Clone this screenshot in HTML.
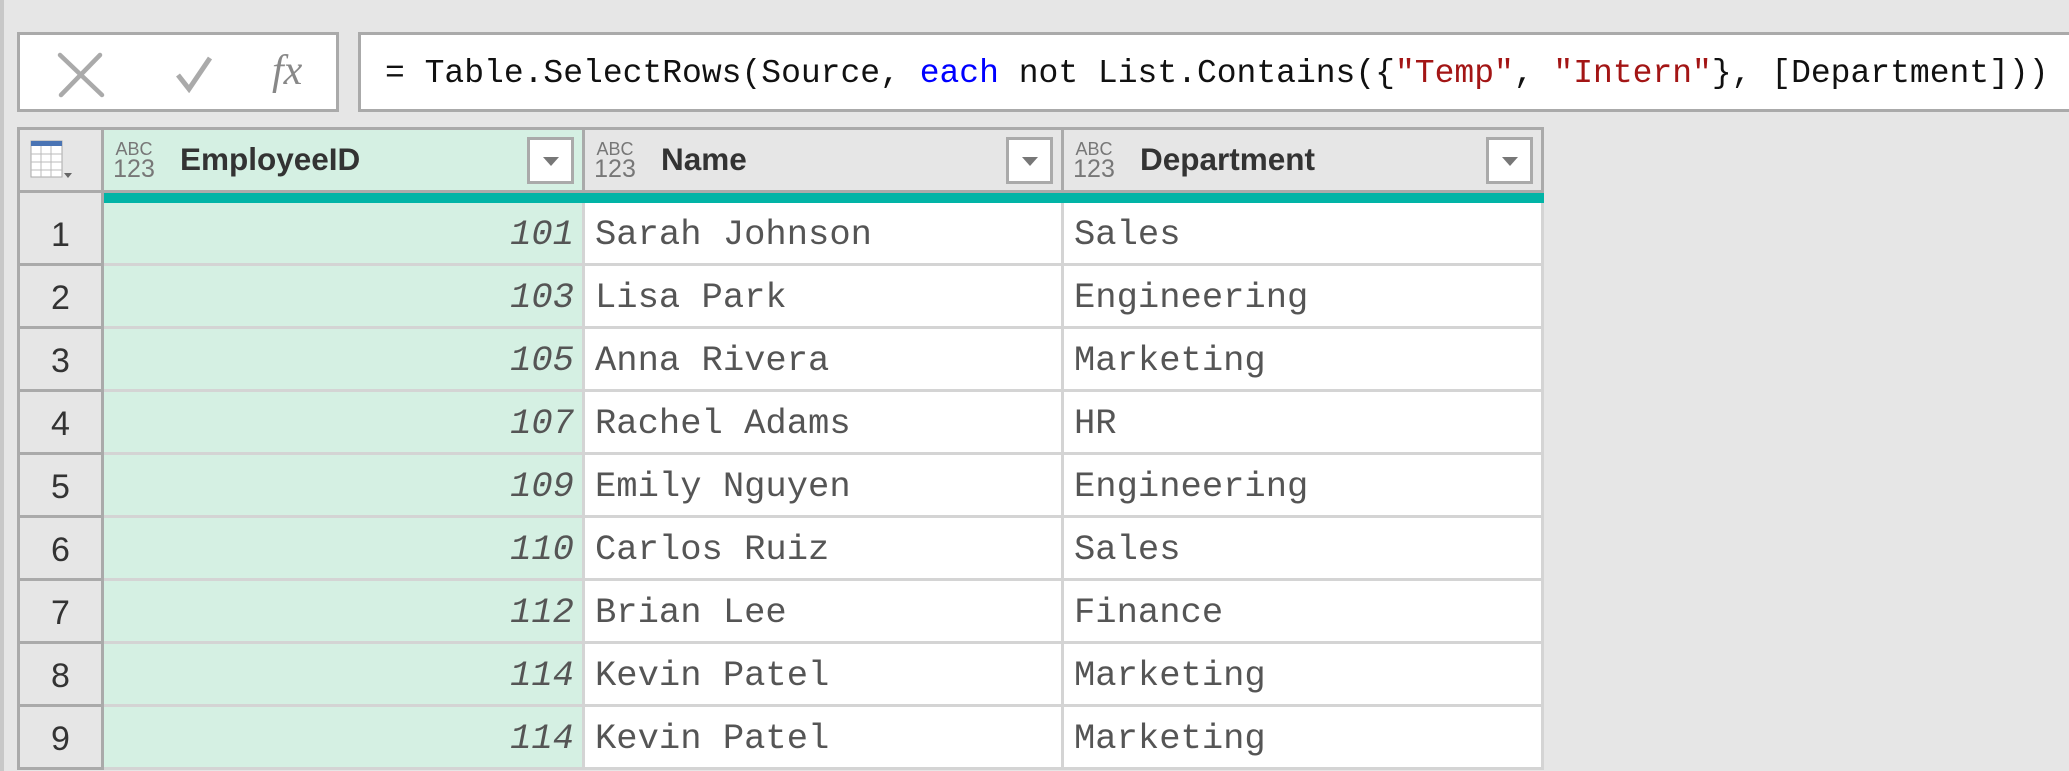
<!DOCTYPE html>
<html><head><meta charset="utf-8"><style>
*{margin:0;padding:0;box-sizing:border-box}
body{width:2069px;height:771px;background:#e6e6e6;position:relative;overflow:hidden;font-family:"Liberation Sans",sans-serif}
.a{position:absolute}
.mono{font-family:"Liberation Mono",monospace}
.hdr{position:absolute;top:127px;height:66px;background:#e6e6e6;border:3px solid #aaa;border-left:none}
.ht{position:absolute;left:76px;top:11px;font-weight:bold;font-size:31.5px;color:#333}
.ic{position:absolute;left:9px;top:10px;font-size:18px;line-height:18px;color:#777;text-align:center;width:42px}
.ic b{display:block;font-weight:normal;font-size:25px;line-height:22px}
.dd{position:absolute;right:8px;top:7px;width:47px;height:47px;background:#fff;border:3px solid #aaa}
.dd:after{content:"";position:absolute;left:13px;top:17px;border-left:8px solid transparent;border-right:8px solid transparent;border-top:9px solid #777}
.row{position:absolute;left:17px;height:63px;width:1527px}
.rn{position:absolute;left:0;top:0;width:87px;height:63px;background:#e6e6e6;border-left:3px solid #aaa;border-right:3px solid #aaa;border-bottom:3px solid #aaa;font-size:34px;color:#333;text-align:center;line-height:64px}
.c{position:absolute;top:0;height:63px;border-right:3px solid #d4d4d4;border-bottom:3px solid #d4d4d4;font-family:"Liberation Mono",monospace;font-size:35.5px;color:#555;line-height:64px;padding-left:10px;white-space:pre}
.c1{left:87px;width:481px;background:#d5f0e3;text-align:right;padding-right:8px;font-style:italic}
.c2{left:568px;width:479px;background:#fff}
.c3{left:1047px;width:480px;background:#fff}
</style></head><body>
<div class="a" style="left:0;top:0;width:4px;height:771px;background:#c8c8c8"></div>
<div class="a" style="left:17px;top:32px;width:322px;height:80px;background:#fff;border:3px solid #aaa">
<svg class="a" style="left:36px;top:17px" width="50" height="46" viewBox="0 0 50 46"><path d="M4 3 L46 43 M44 3 L5 43" stroke="#aaa" stroke-width="4.5" fill="none" stroke-linecap="round"/></svg>
<svg class="a" style="left:155px;top:20px" width="38" height="38" viewBox="0 0 38 38"><path d="M3 20 L14 34 L35 3" stroke="#aaa" stroke-width="5" fill="none"/></svg>
<div class="a" style="left:252px;top:12px;font-family:'Liberation Serif',serif;font-style:italic;font-size:42px;color:#888">fx</div>
</div>
<div class="a" style="left:358px;top:32px;width:1720px;height:80px;background:#fff;border:3px solid #aaa"></div>
<div class="a mono" style="left:385px;top:55px;font-size:33px;color:#111;white-space:pre">= Table.SelectRows(Source, <span style="color:#00f">each</span> not List.Contains({<span style="color:#a31515">"Temp"</span>, <span style="color:#a31515">"Intern"</span>}, [Department]))</div>

<div class="hdr" style="left:17px;width:87px;border-left:3px solid #aaa">
<svg class="a" style="left:10px;top:10px" width="50" height="42" viewBox="0 0 50 42"><rect x="1" y="1" width="31" height="36" fill="#fff" stroke="#aaa"/><rect x="1" y="1" width="31" height="5" fill="#4a74b4"/><path d="M1 14H32M1 22H32M1 30H32M11 6V37M21 6V37" stroke="#bbb"/><path d="M34 33 L42 33 L38 38Z" fill="#666"/></svg>
</div>
<div class="hdr" style="left:104px;width:481px;background:#d5f0e3"><div class="ic">ABC<b>123</b></div><div class="ht">EmployeeID</div><div class="dd"></div></div>
<div class="hdr" style="left:585px;width:479px"><div class="ic">ABC<b>123</b></div><div class="ht">Name</div><div class="dd"></div></div>
<div class="hdr" style="left:1064px;width:480px"><div class="ic">ABC<b>123</b></div><div class="ht">Department</div><div class="dd"></div></div>
<div class="a" style="left:17px;top:193px;width:87px;height:10px;background:#e6e6e6;border-left:3px solid #aaa;border-right:3px solid #aaa"></div>
<div class="a" style="left:104px;top:193px;width:1440px;height:10px;background:#01b4a6"></div>

<div class="row" style="top:203px"><div class="rn">1</div><div class="c c1">101</div><div class="c c2">Sarah Johnson</div><div class="c c3">Sales</div></div>
<div class="row" style="top:266px"><div class="rn">2</div><div class="c c1">103</div><div class="c c2">Lisa Park</div><div class="c c3">Engineering</div></div>
<div class="row" style="top:329px"><div class="rn">3</div><div class="c c1">105</div><div class="c c2">Anna Rivera</div><div class="c c3">Marketing</div></div>
<div class="row" style="top:392px"><div class="rn">4</div><div class="c c1">107</div><div class="c c2">Rachel Adams</div><div class="c c3">HR</div></div>
<div class="row" style="top:455px"><div class="rn">5</div><div class="c c1">109</div><div class="c c2">Emily Nguyen</div><div class="c c3">Engineering</div></div>
<div class="row" style="top:518px"><div class="rn">6</div><div class="c c1">110</div><div class="c c2">Carlos Ruiz</div><div class="c c3">Sales</div></div>
<div class="row" style="top:581px"><div class="rn">7</div><div class="c c1">112</div><div class="c c2">Brian Lee</div><div class="c c3">Finance</div></div>
<div class="row" style="top:644px"><div class="rn">8</div><div class="c c1">114</div><div class="c c2">Kevin Patel</div><div class="c c3">Marketing</div></div>
<div class="row" style="top:707px"><div class="rn">9</div><div class="c c1">114</div><div class="c c2">Kevin Patel</div><div class="c c3">Marketing</div></div>
</body></html>
